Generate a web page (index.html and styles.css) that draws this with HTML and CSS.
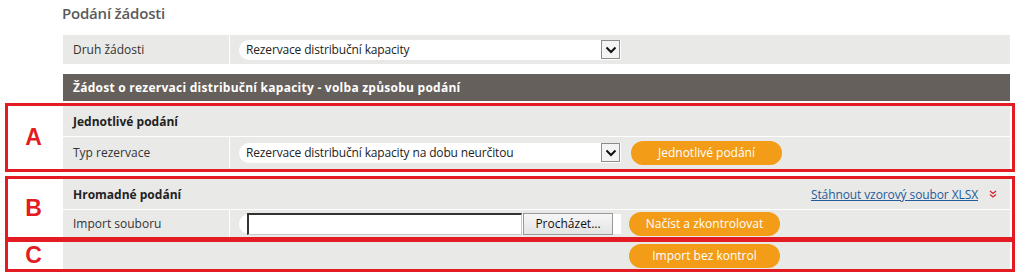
FILE: index.html
```html
<!DOCTYPE html>
<html lang="cs">
<head>
<meta charset="utf-8">
<title>Podání žádosti</title>
<link rel="stylesheet" href="styles.css">
</head>
<body>
<div class="page">
  <h1 class="title">Podání žádosti</h1>

  <div class="tbl top-tbl">
    <div class="row field-row">
      <div class="lbl">Druh žádosti</div>
      <div class="val">
        <div class="pill select">
          <span class="sel-text">Rezervace distribuční kapacity</span>
          <span class="arrow"><svg width="12" height="8" viewBox="0 0 12 8"><path d="M1.5 1.5 L6 6 L10.5 1.5" fill="none" stroke="#111" stroke-width="2"/></svg></span>
        </div>
      </div>
    </div>
  </div>

  <div class="band">Žádost o rezervaci distribuční kapacity - volba způsobu podání</div>

  <div class="sec sec-a">
    <div class="mark">A</div>
    <div class="tbl">
      <div class="row head-row"><div class="hd">Jednotlivé podání</div></div>
      <div class="row field-row">
        <div class="lbl">Typ rezervace</div>
        <div class="val">
          <div class="pill select">
            <span class="sel-text">Rezervace distribuční kapacity na dobu neurčitou</span>
            <span class="arrow"><svg width="12" height="8" viewBox="0 0 12 8"><path d="M1.5 1.5 L6 6 L10.5 1.5" fill="none" stroke="#111" stroke-width="2"/></svg></span>
          </div>
          <button class="btn btn-a">Jednotlivé podání</button>
        </div>
      </div>
    </div>
  </div>

  <div class="sec sec-b">
    <div class="mark">B</div>
    <div class="tbl">
      <div class="row head-row">
        <div class="hd">Hromadné podání</div>
        <a class="dl" href="#">Stáhnout vzorový soubor XLSX</a>
        <span class="dl-ico"><svg width="8" height="8" viewBox="0 0 8 8"><path d="M1 1 L4 3.5 L7 1 M1 4.5 L4 7 L7 4.5" fill="none" stroke="#d9232e" stroke-width="1.3"/></svg></span>
      </div>
      <div class="row field-row b-field">
        <div class="lbl">Import souboru</div>
        <div class="val">
          <div class="pill file">
            <span class="file-box"></span>
            <span class="browse">Procházet...</span>
          </div>
          <button class="btn btn-b">Načíst a zkontrolovat</button>
        </div>
      </div>
    </div>
  </div>

  <div class="sec sec-c">
    <div class="mark">C</div>
    <div class="tbl">
      <div class="row c-row">
        <button class="btn btn-c">Import bez kontrol</button>
      </div>
    </div>
  </div>
</div>
</body>
</html>
```
FILE: styles.css
```css
* { box-sizing: border-box; }
html, body { margin: 0; padding: 0; background: #fff; }
body {
  font-family: "Open Sans", "Noto Sans", "DejaVu Sans", sans-serif;
  font-size: 12px;
  color: #333;
}
.page { width: 1024px; height: 277px; overflow: hidden; }

.title {
  margin: 0 0 12px 62px;
  padding-top: 3px;
  font-size: 15px;
  line-height: 20px;
  font-weight: 600;
  color: #5a5a5a;
  letter-spacing: -0.2px;
}

.tbl { background: #e9e9e8; display: flex; flex-direction: column; }
.top-tbl { margin-left: 63px; width: 947px; }

.row { display: flex; align-items: center; }
.field-row { height: 29px; }
.head-row { height: 31px; border-bottom: 1px solid #fff; padding: 0 10px; }
.hd { font-weight: 700; color: #222; flex: 1; }

.lbl {
  width: 167px;
  align-self: stretch;
  display: flex;
  align-items: center;
  padding-left: 10px;
  border-right: 1px solid #fff;
  color: #333;
}
.val { display: flex; align-items: center; padding-left: 9px; }

.pill {
  width: 382px;
  height: 20px;
  background: #fff;
  border-radius: 10px 0 0 10px;
  display: flex;
  align-items: center;
}
.select { padding-left: 7px; }
.sel-text { flex: 1; color: #222; white-space: nowrap; letter-spacing: -0.15px; }
.arrow {
  width: 19px;
  height: 19px;
  margin-right: 1px;
  border: 1px solid #8c8c8c;
  background: #f4f4f4;
  display: flex;
  align-items: center;
  justify-content: center;
}

.band {
  margin: 10px 0 2px 63px;
  width: 947px;
  height: 27px;
  background: #66605c;
  color: #fff;
  font-weight: 700;
  padding-left: 10px;
  display: flex;
  align-items: center;
  letter-spacing: 0.25px;
}

.sec {
  margin-left: 5px;
  width: 1010px;
  border: 3px solid #e31b23;
  padding-right: 2px;
  display: flex;
}
.sec .tbl { width: 947px; }
.mark {
  width: 55px;
  display: flex;
  align-items: center;
  justify-content: center;
  padding-right: 4px;
  font-family: "Liberation Sans", Arial, sans-serif;
  font-weight: 700;
  font-size: 23px;
  color: #e31b23;
}
.sec-a { height: 69px; }
.sec-a .field-row { height: 31px; }
.sec-b { margin-top: 4px; height: 64px; }
.sec-b .head-row { height: 31px; }
.b-field { height: 27px; }
.sec-c { margin-top: -1px; height: 33px; }
.c-row { height: 27px; padding-left: 566px; }

.btn {
  border: none;
  background: #f39c18;
  color: #fff;
  font-family: "Open Sans", "Noto Sans", sans-serif;
  font-size: 12px;
  height: 24px;
  width: 151px;
  border-radius: 12px;
  padding: 0;
  cursor: pointer;
}
.btn-a { margin-left: 10px; }
.btn-b { margin-left: 8px; }

.dl {
  color: #1f5c99;
  text-decoration: underline;
  font-size: 12px;
  letter-spacing: -0.1px;
}
.dl-ico { margin-left: 11px; margin-right: 3px; display: flex; }

.file { padding-left: 8px; }
.file-box {
  width: 275px;
  height: 22px;
  border: 1px solid #c8c8c8;
  border-top: 2px solid #333;
  border-left: 2px solid #333;
  background: #fff;
}
.browse {
  width: 90px;
  height: 22px;
  border: 1px solid #999;
  background: linear-gradient(#f6f6f6, #e4e4e4);
  color: #111;
  display: flex;
  align-items: center;
  justify-content: center;
  margin-left: 1px;
}
```
